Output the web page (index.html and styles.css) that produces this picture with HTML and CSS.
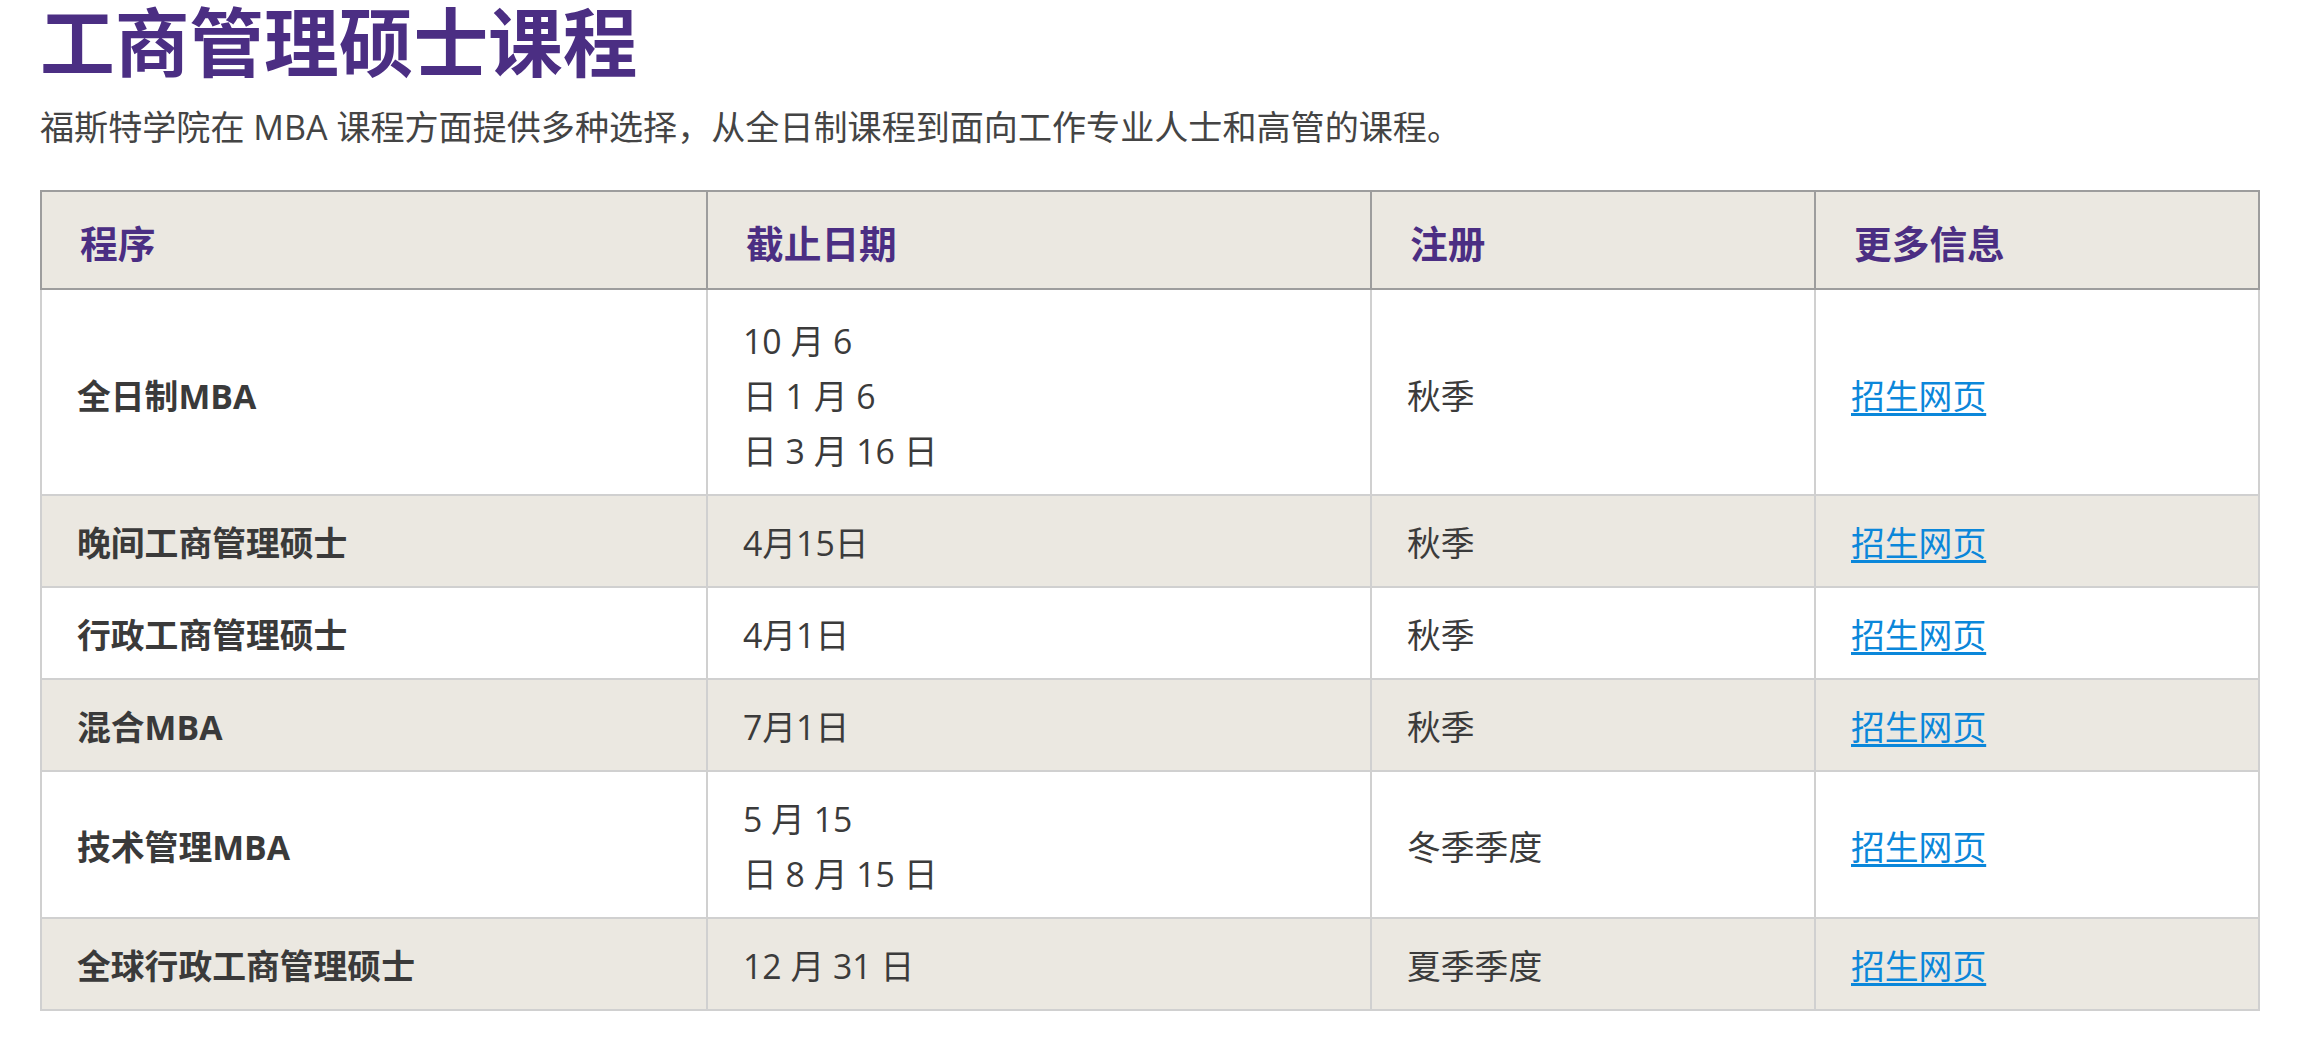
FILE: index.html
```html
<!DOCTYPE html>
<html lang="zh-CN">
<head>
<meta charset="utf-8">
<title>工商管理硕士课程</title>
<link rel="stylesheet" href="styles.css">
</head>
<body>
<main class="page">
  <h1 class="title">工商管理硕士课程</h1>
  <p class="intro">福斯特学院在 MBA 课程方面提供多种选择，从全日制课程到面向工作专业人士和高管的课程。</p>
  <table class="programs">
    <colgroup>
      <col class="c1"><col class="c2"><col class="c3"><col class="c4">
    </colgroup>
    <thead>
      <tr><th>程序</th><th>截止日期</th><th>注册</th><th>更多信息</th></tr>
    </thead>
    <tbody>
      <tr class="first">
        <td class="name">全日制MBA</td>
        <td>10 月 6<br>日 1 月 6<br>日 3 月 16 日</td>
        <td>秋季</td>
        <td><a href="#">招生网页</a></td>
      </tr>
      <tr>
        <td class="name">晚间工商管理硕士</td>
        <td>4月15日</td>
        <td>秋季</td>
        <td><a href="#">招生网页</a></td>
      </tr>
      <tr>
        <td class="name">行政工商管理硕士</td>
        <td>4月1日</td>
        <td>秋季</td>
        <td><a href="#">招生网页</a></td>
      </tr>
      <tr>
        <td class="name">混合MBA</td>
        <td>7月1日</td>
        <td>秋季</td>
        <td><a href="#">招生网页</a></td>
      </tr>
      <tr>
        <td class="name">技术管理MBA</td>
        <td>5 月 15<br>日 8 月 15 日</td>
        <td>冬季季度</td>
        <td><a href="#">招生网页</a></td>
      </tr>
      <tr>
        <td class="name">全球行政工商管理硕士</td>
        <td>12 月 31 日</td>
        <td>夏季季度</td>
        <td><a href="#">招生网页</a></td>
      </tr>
    </tbody>
  </table>
</main>
</body>
</html>
```
FILE: styles.css
```css
html, body {
  margin: 0;
  padding: 0;
  background: #ffffff;
}
body {
  font-family: "Open Sans", "Noto Sans CJK SC", sans-serif;
  color: #3b3b3b;
}
.page {
  padding: 0 44px 0 40px;
}
.title {
  margin: 0;
  font-size: 74.7px;
  line-height: 84px;
  font-weight: 700;
  color: #4b2e83;
}
.intro {
  margin: 14px 0 34px;
  font-size: 34.1px;
  line-height: 58px;
  color: #444444;
}
.programs {
  width: 2218px;
  table-layout: fixed;
  border-collapse: collapse;
  font-size: 33.8px;
  line-height: 55px;
}
.c1 { width: 666px; }
.c2 { width: 664px; }
.c3 { width: 444px; }
.c4 { width: 444px; }
.programs th {
  background: #ebe8e1;
  color: #4b2e83;
  font-size: 37.7px;
  line-height: 62px;
  font-weight: 700;
  text-align: left;
  padding: 21px 40px 13px 38px;
  border: 2px solid #9d9d9d;
}
.programs td {
  padding: 20px 36px 15px 35px;
  border: 2px solid #d0d0d0;
  vertical-align: middle;
  color: #3b3b3b;
}
.programs tr.first td {
  padding-top: 24px;
}
.programs tbody tr:nth-child(even) td {
  background: #ebe8e1;
}
.programs td.name {
  font-weight: 700;
  color: #3a3a3a;
}
.programs a {
  color: #0b87da;
  text-decoration: underline;
  text-underline-offset: 4px;
}
```
